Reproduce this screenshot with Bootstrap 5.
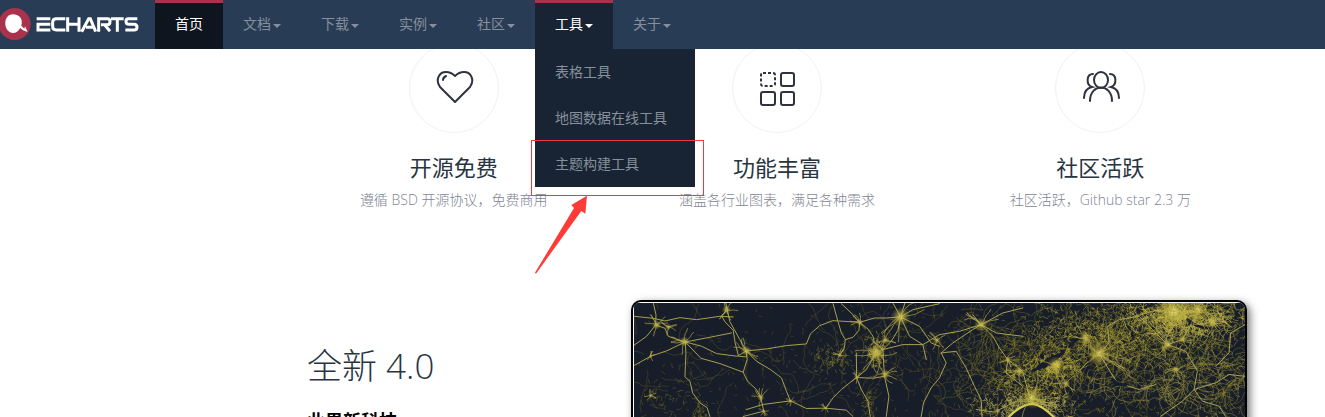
<!DOCTYPE html>
<html lang="zh-CN">
<head>
<meta charset="utf-8">
<meta name="viewport" content="width=device-width, initial-scale=1">
<title>ECharts</title>
<link rel="stylesheet" href="https://cdn.jsdelivr.net/npm/bootstrap@5.3.0/dist/css/bootstrap.min.css">
<style>
body{font-family:"Open Sans","Noto Sans CJK SC",sans-serif;font-size:14px;line-height:20px;color:#293c55;height:100vh;overflow:hidden;background:#fff}
.site-nav{background:#293c55;height:49px;z-index:10}
.brand-link{width:155px;height:49px}
.site-nav .nav-link{border-radius:0;border-top:3px solid transparent;padding:11px 20px 15px;height:49px;color:#86909c;white-space:nowrap}
.site-nav .nav-link:hover,.site-nav .nav-link.show,.site-nav .nav-link.active{color:#fff;border-top-color:#a9334c;background:#182433}
.site-nav .nav-link.active{background:#0e151e}
.site-nav button.nav-link{background:none;border-right:0;border-left:0;border-bottom:0}
.site-nav button.nav-link.show{background:#182433}
.site-nav .dropdown-toggle::after{border-top:4px solid;border-right:4px solid transparent;border-left:4px solid transparent;margin-left:2px;vertical-align:1px}
.tool-menu{top:49px;left:0;width:160px;min-width:0;border:0;border-radius:0;background:#182433;padding:0;margin:0;font-size:14px}
.tool-menu .dropdown-item{color:#86909c;padding:13px 20px;line-height:20px}
.tool-menu .dropdown-item:hover{background:#0e151e;color:#fff}
.callout-box{left:-4px;top:91px;width:173px;height:56px;border:1px solid #f33b3b;pointer-events:none}
.callout-arrow{left:-4px;top:143px;pointer-events:none}
.main-area{max-width:970px;margin-right:63px;margin-left:auto}
.feature-icon{width:90px;height:90px;border:1px solid #f1f1f1;border-radius:50%;margin-top:-6px}
.feature-title{font-size:22px;line-height:28px;font-weight:400;color:#293441;margin:20px 0 9px}
.feature-text{font-size:14px;font-weight:300;color:#7e8592;line-height:20px}
.release{padding:90px 15px 0}
.release-copy{width:324px}
.release-title{font-size:35px;line-height:48px;font-weight:300;color:#293441;margin:42px 0 18px}
.release-lead{font-size:18px;line-height:26px;font-weight:700;color:#000}
.shot-frame{border:2px solid #000;border-radius:10px;padding:1px 0 0 1px;background:#fff;box-shadow:3px 3px 8px rgba(0,0,0,.55);overflow:hidden}
</style>
</head>
<body>
<header class="site-nav position-relative d-flex">
  <a class="brand-link d-block flex-shrink-0" href="#" aria-label="ECharts">
    <svg width="155" height="49" viewBox="0 0 465 147" fill="none">
      <circle cx="44" cy="72" r="48" fill="#a9334c"/>
      <path d="M38 43C60 43 70 59 64 77L73 86 75 79 83 96 69 91 61 84C52 100 34 105 22 90C9 72 17 43 38 43Z" fill="#fff"/>
      <g stroke="#fff" stroke-width="9">
        <path d="M110 56H151M151 73H114V90H151M196 56H169Q158 56 158 67V79Q158 90 169 90H196M203 52V95M237 52V95M203 73H237M245 95L266 56H271L287 95M258 82H280M296 95V56H323Q330 56 330 65Q330 74 321 74H303M315 76L330 94M333 56H371M352 58V95M412 56H385Q378 56 378 64Q378 73 387 73H402Q411 73 411 82Q411 90 402 90H376"/>
      </g>
    </svg>
  </a>
  <ul class="nav flex-nowrap">
    <li class="nav-item"><a class="nav-link active" href="#">首页</a></li>
    <li class="nav-item"><button type="button" class="nav-link dropdown-toggle">文档</button></li>
    <li class="nav-item"><button type="button" class="nav-link dropdown-toggle">下载</button></li>
    <li class="nav-item"><button type="button" class="nav-link dropdown-toggle">实例</button></li>
    <li class="nav-item"><button type="button" class="nav-link dropdown-toggle">社区</button></li>
    <li class="nav-item dropdown">
      <button type="button" class="nav-link dropdown-toggle show" aria-expanded="true">工具</button>
      <ul class="dropdown-menu tool-menu show">
        <li><a class="dropdown-item" href="#">表格工具</a></li>
        <li><a class="dropdown-item" href="#">地图数据在线工具</a></li>
        <li><a class="dropdown-item" href="#">主题构建工具</a></li>
        <li class="callout-box position-absolute" aria-hidden="true"></li>
        <li class="callout-arrow position-absolute" aria-hidden="true">
          <svg class="d-block" width="60" height="84" viewBox="33 441 180 252"><path d="M201 452L196 506 184 498 48 686 45 683 162 489 154 480Z" fill="#ff3b38"/></svg>
        </li>
      </ul>
    </li>
    <li class="nav-item"><button type="button" class="nav-link dropdown-toggle">关于</button></li>
  </ul>
</header>

<main class="main-area">
  <section class="row g-0 text-center">
    <div class="col-4">
      <div class="feature-icon d-flex align-items-center justify-content-center mx-auto">
        <svg width="40" height="40" viewBox="0 0 40 40" fill="none" stroke="#30323f" stroke-width="2" stroke-linecap="round" stroke-linejoin="round"><path d="M21 34L6 19C1 12 5 4 12 4C16 4 18 5 21 8C24 5 26 4 30 4C37 4 41 12 36 19ZM9 12C9 10 10 9 12 8"/></svg>
      </div>
      <h2 class="feature-title">开源免费</h2>
      <p class="feature-text mb-0">遵循 BSD 开源协议，免费商用</p>
    </div>
    <div class="col-4">
      <div class="feature-icon d-flex align-items-center justify-content-center mx-auto">
        <svg width="40" height="40" viewBox="0 0 40 40" fill="none" stroke="#30323f" stroke-width="2"><rect x="4" y="5" width="14" height="13" rx="2" stroke-dasharray="3 2"/><rect x="24" y="5" width="13" height="13" rx="2"/><rect x="4" y="24" width="14" height="13" rx="2"/><rect x="24" y="24" width="13" height="13" rx="2"/></svg>
      </div>
      <h2 class="feature-title">功能丰富</h2>
      <p class="feature-text mb-0">涵盖各行业图表，满足各种需求</p>
    </div>
    <div class="col-4">
      <div class="feature-icon d-flex align-items-center justify-content-center mx-auto">
        <svg width="40" height="40" viewBox="0 0 40 40" fill="none" stroke="#30323f" stroke-width="2" stroke-linecap="round"><ellipse cx="21" cy="12" rx="7" ry="8"/><path d="M10 33C10 15 32 15 32 33M13 6C6 6 6 17 12 19C7 20 4 24 4 30M30 6C37 6 37 17 31 19C36 20 39 24 39 30"/></svg>
      </div>
      <h2 class="feature-title">社区活跃</h2>
      <p class="feature-text mb-0">社区活跃，Github star 2.3 万</p>
    </div>
  </section>

  <section class="release d-flex">
    <div class="release-copy flex-shrink-0">
      <h2 class="release-title">全新 4.0</h2>
      <p class="release-lead mb-0">业界新科技</p>
    </div>
    <div class="shot-frame flex-grow-1">
      <svg class="d-block w-100" viewBox="42 40 1836 400" role="img" aria-label="神经元网络图" fill="none" stroke-linecap="round" stroke-linejoin="round">
        <defs><radialGradient id="glow"><stop offset="0" stop-color="#f5eb90"/><stop offset=".25" stop-color="#d9cc4b" stop-opacity=".65"/><stop offset="1" stop-color="#a79a2c" stop-opacity="0"/></radialGradient></defs>
        <rect x="42" y="40" width="1836" height="400" fill="#181e29"/>
        <g id="fibres"></g>
        <g stroke="#a8a052" stroke-width="3">
          <path d="M100 40L108 75 107 106 80 140 42 167M107 106L135 116 145 140 185 155 196 157 198 190 195 262 210 275 218 310 240 340 262 355 270 381 280 440M42 80L100 86 135 94 180 84 230 90 300 80 340 82M196 157L140 184 92 200 42 228M196 157L260 145 335 130M196 157L245 170 290 192 352 200 380 184M196 157L243 206 300 222 370 248M318 40L322 62 305 78 315 96 340 122 346 160 356 200 380 202 380 184 382 210 370 248 383 275 410 300 423 325 432 365M322 62L330 96 360 150 380 184 410 215 452 240 485 265 500 305 512 334M380 184L440 178 500 168 560 163 572 133 600 108 640 93 720 98 765 85 800 85 843 82"/>
          <path d="M640 42L655 96 665 130 677 150 674 175 660 197M677 150L700 143 718 122 720 98 700 75 665 42M720 98L745 118 760 140 765 160 790 180M843 82L835 122 815 155 790 180 792 220 795 262 808 320 800 381 795 440M711 264L690 280 665 300 640 325 618 356M711 264L725 300 745 335 752 381 750 440M711 264L710 190M711 264L740 240 770 190M711 264L760 266 795 260M512 334L560 357 618 356 680 362 700 381M380 360L430 345 512 334M432 365L370 381M843 82L820 40M843 82L856 40M843 82L880 60 960 42M843 82L900 110 935 160 960 170M843 82L870 140 910 165 920 210M790 180L850 165 910 165 960 135"/>
          <path d="M900 440L905 381 912 340 935 295 960 265 980 220 965 190 1000 160 1060 120 1085 105M960 135L1020 125 1085 105 1060 75M1085 105L1150 70 1210 55M1085 105L1120 140 1140 175 1165 210 1160 250 1210 290M1085 105L1130 130 1210 140M965 190L1010 185 1040 235 1065 290 1085 330 1088 381M1165 210L1210 245 1230 320M1070 360L1125 368 1190 335 1225 335 1300 350M1440 192L1470 160 1465 110 1500 90 1560 80 1600 120 1645 165 1690 150 1745 55M1440 192L1475 250 1495 280 1560 300 1610 285M1645 165L1700 185 1735 245 1725 300 1690 335 1625 380M1725 300L1790 280 1830 255 1878 260M1725 300L1750 335 1800 350 1820 381M1878 105L1835 130 1830 190 1790 230"/>
        </g>
        <path d="M1120 440Q1190 343 1240 343Q1288 351 1350 440Z" fill="#181e29" stroke="#d5c957" stroke-width="7"/>
        <path d="M1235 250Q1275 200 1340 185Q1305 227 1235 250Z" fill="#181e29"/>
        <path d="M1705 90Q1740 120 1785 115M1480 270Q1500 290 1520 285M1350 170L1378 145" stroke="#181e29" stroke-width="9"/>
        <g id="somas"></g>
      </svg>
    </div>
  </section>
</main>
<script src="https://cdn.jsdelivr.net/npm/bootstrap@5.3.0/dist/js/bootstrap.bundle.min.js"></script>
<script>
// Grow fine dendrites around the cell bodies with a repeatable random walk.
let seed = 71;
const rnd = () => (seed = (seed * 16807) % 2147483647) / 2147483647;
const walk = (x, y, steps, size, bend) => {
  let angle = rnd() * Math.PI * 2, d = `M${x | 0} ${y | 0}`;
  for (let i = 0; i < steps; i++) {
    angle += (rnd() - .5) * bend;
    x += Math.cos(angle) * size; y += Math.sin(angle) * size;
    d += `L${x | 0} ${y | 0}`;
  }
  return d;
};
// centre x, centre y, spread x, spread y, strands, steps, colour, opacity
const zones = [
  [960,220,1900,400,130,16,'#75692a',.5],
  [960,220,1900,400,650,2,'#6f6820',.6],
  [1130,200,420,380,90,12,'#7f762c',.6],
  [1480,200,820,400,300,8,'#8a8028',.6],
  [1480,200,820,400,900,2,'#8c812a',.7],
  [1560,130,640,190,620,3,'#a99d35',.7],
  [1430,150,380,170,420,3,'#b1a436',.7],
  [1690,85,330,110,420,4,'#cdbf49',.7],
  [1240,300,220,170,330,3,'#c0b23c',.7],
  [1310,230,150,80,220,2,'#c9ba36',.7],
  [1220,350,300,70,260,3,'#cfc25a',.7],
  [1780,260,260,300,160,6,'#9b903b',.7],
  [1560,290,380,130,50,10,'#a89d47',.7],
  [770,185,60,90,150,2,'#b8ab3c',.7],
  [640,210,110,80,90,2,'#8d842a',.7],
  [160,320,200,160,60,3,'#81782b',.6],
  [750,350,40,140,70,2,'#8d842a',.6],
  [240,370,40,90,60,2,'#8d842a',.6]
];
let fibres = '';
for (const [cx, cy, w, h, n, steps, colour, opacity] of zones) {
  let d = '';
  for (let i = 0; i < n; i++) d += walk(cx + (rnd() + rnd() - 1) * w * .6, cy + (rnd() + rnd() - 1) * h * .6, steps, steps > 3 ? 8 : 4, 1.1);
  fibres += `<path d="${d}" stroke="${colour}" stroke-opacity="${opacity}" stroke-width="2"/>`;
}
const somas = [[110,106,14],[145,112,10],[193,156,16],[320,60,14],[380,184,16],[423,324,11],[92,200,6],[92,318,7],[432,365,6],[512,335,6],[720,98,11],[843,82,30],[770,190,26],[797,152,13],[797,254,15],[711,264,7],[660,197,8],[618,356,6],[952,152,12],[1085,105,22],[1165,210,10],[1440,192,36],[1310,228,28],[1240,325,34],[1200,245,16],[1645,165,20],[1690,150,12],[1665,65,58],[1735,60,30],[1780,95,24],[1670,240,13],[1340,282,14],[1400,145,20]];
let cells = '';
for (const [x, y, r] of somas) {
  let d = '';
  for (let i = 0; i < 6; i++) d += walk(x, y, 5, r / 2, .7);
  cells += `<circle cx="${x}" cy="${y}" r="${r}" fill="url(#glow)"/><path d="${d}" stroke="#b5a94a" stroke-width="2"/>`;
}
document.getElementById('fibres').innerHTML = fibres;
document.getElementById('somas').innerHTML = cells;
</script>
</body>
</html>
